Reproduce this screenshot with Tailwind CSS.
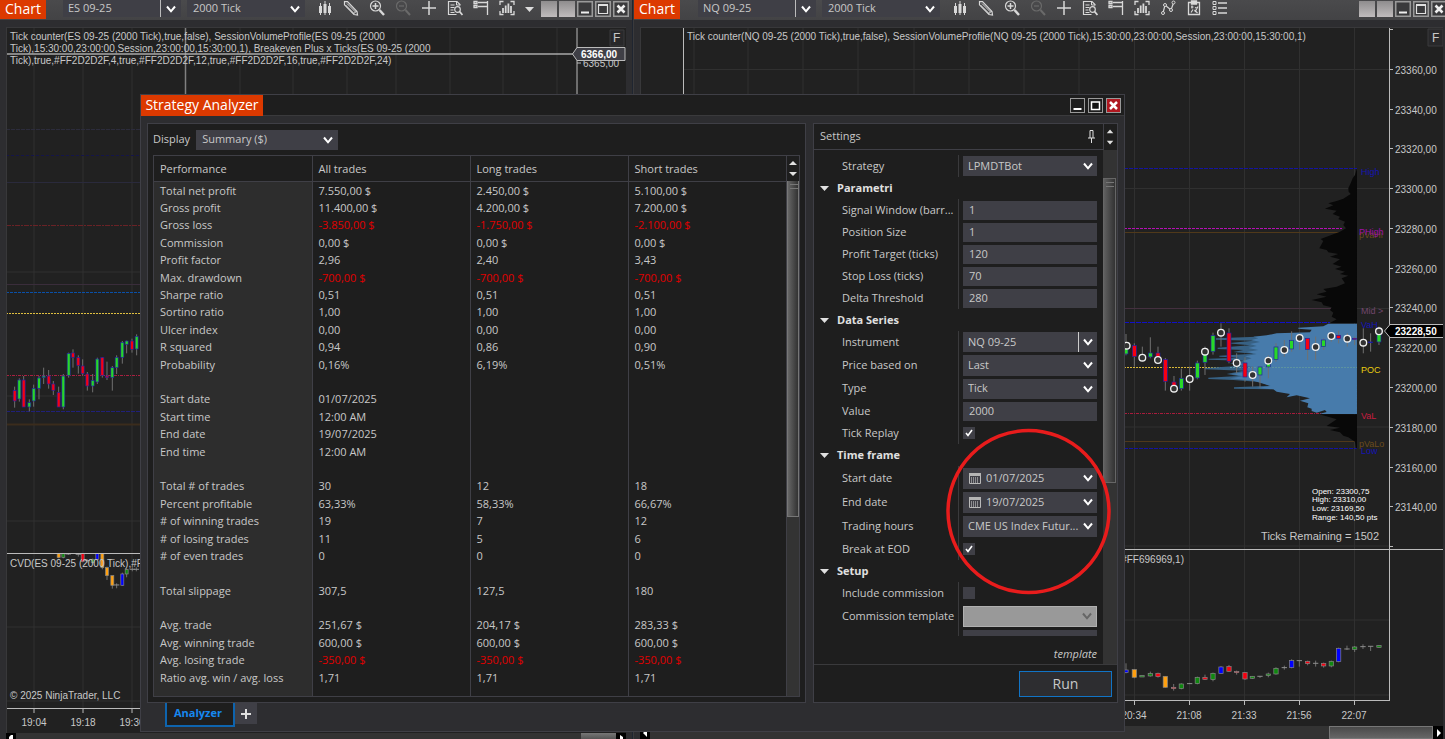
<!DOCTYPE html>
<html lang="en">
<head>
    <meta charset="UTF-8" />
    <meta name="viewport" content="width=device-width, initial-scale=1.0" />
    <title>Strategy Analyzer</title>
    <script src="https://cdn.jsdelivr.net/npm/@tailwindcss/browser@4"></script>
</head>
<body class="relative flex h-screen overflow-hidden bg-[#2d2d30] font-['Open_Sans','Noto_Sans',sans-serif] text-[11px] text-[#c8c8c8]">

    <!-- Shared icons -->
    <svg class="hidden">
        <symbol id="chevron" viewBox="0 0 10 8"><path d="M1 1.500 5 6.300 9 1.500" fill="none" stroke="currentColor" stroke-width="2" /></symbol>
        <symbol id="bars" viewBox="0 0 16 16"><path d="M3.500 3v12M8 1v14M12.500 3v12" stroke="currentColor" stroke-width="1" /><path d="M2 6h3v7H2zM6.500 4h3v9h-3zM11 6h3v7h-3z" fill="currentColor" /></symbol>
        <symbol id="pencil" viewBox="0 0 16 16"><path d="M1.500 1.500 4.500 1.700 14 11.500 14.500 15 11 14.500 1.500 4.800z" fill="none" stroke="currentColor" stroke-width="1.200" /><path d="M4 3.500 12.500 12M2.500 5 11 13.500M10 14l4-3" stroke="currentColor" stroke-width="1" /></symbol>
        <symbol id="zoomin" viewBox="0 0 16 16"><circle cx="6.500" cy="6" r="5" fill="none" stroke="currentColor" stroke-width="1.200" /><path d="M3.500 6h6M6.500 3v6" stroke="currentColor" stroke-width="1.500" /><path d="m10.500 10 4.500 5" stroke="currentColor" stroke-width="2.400" /></symbol>
        <symbol id="zoomout" viewBox="0 0 16 16"><circle cx="6.500" cy="6" r="5" fill="none" stroke="currentColor" stroke-width="1.200" /><path d="M4 6h5" stroke="currentColor" stroke-width="1.200" /><path d="m10.500 10 4.500 5" stroke="currentColor" stroke-width="2" /></symbol>
        <symbol id="plus" viewBox="0 0 16 16"><path d="M1 8h14M8 1v14" stroke="currentColor" stroke-width="1.500" /></symbol>
        <symbol id="docsearch" viewBox="0 0 16 16"><path d="M13 5.500V4.500L10 1.500H1.500v13h8" fill="none" stroke="currentColor" stroke-width="1.200" /><path d="M9.500 1.500V5H13M3.500 5h4M3.500 7.500h4M3.500 10h3M3.500 12.500h4" fill="none" stroke="currentColor" /><circle cx="10.500" cy="9.500" r="2.800" fill="none" stroke="currentColor" stroke-width="1.200" /><path d="m12.500 11.500 3 3.500" stroke="currentColor" stroke-width="1.800" /></symbol>
        <symbol id="trader" viewBox="0 0 16 16"><path d="M1 1.500h3v2H1zM1 5.500h3v2H1zM5 2.500h10M5 6.500h9.500M14.500 1v14" fill="none" stroke="currentColor" stroke-width="1.300" /></symbol>
        <symbol id="capture" viewBox="0 0 16 16"><path d="M1 5V1.500h3.500M11.500 1.500H15V5M15 11v3.500h-3.500M4.500 14.500H1V11" fill="none" stroke="currentColor" stroke-width="1.300" /><path d="M4 8v5M6.700 5.500V13M9.400 3.500V13M12 6v7" stroke="currentColor" stroke-width="1.800" /></symbol>
        <symbol id="polyline" viewBox="0 0 16 16"><path d="M3 13 5 5l6 5 2.500-7" fill="none" stroke="currentColor" stroke-width="1.200" /><g fill="#48484a" stroke="currentColor"><circle cx="3" cy="13" r="1.500" /><circle cx="5" cy="5" r="1.500" /><circle cx="11" cy="10" r="1.500" /><circle cx="13.500" cy="2.500" r="1.500" /></g></symbol>
        <symbol id="clipboard" viewBox="0 0 16 16"><path d="M2.500 2.500h11v12h-11zM5.500 1h5v3h-5z" fill="none" stroke="currentColor" stroke-width="1.300" /><path d="M5 7h2.500M6 5.500v3M9 12l3-5.500M9 7.500l2.500 1M5 12.500l2-3M8.500 10l3 3" fill="none" stroke="currentColor" stroke-width="1.200" /></symbol>
        <symbol id="list" viewBox="0 0 16 16"><path d="M1 1.500h3v3H1zM1 6.500h3v3H1zM1 11.500h3v3H1z" fill="none" stroke="currentColor" /><path d="M6 3h9M6 8h9M6 13h9" stroke="currentColor" stroke-width="1.400" /></symbol>
        <symbol id="min" viewBox="0 0 16 16"><rect x=".75" y=".75" width="14.500" height="14.500" fill="#3a3a3c" stroke="#9a9a9a" stroke-width="1.500" /><path d="M4 11.500h8" stroke="#eee" stroke-width="2" /></symbol>
        <symbol id="max" viewBox="0 0 16 16"><rect x=".75" y=".75" width="14.500" height="14.500" fill="#3a3a3c" stroke="#9a9a9a" stroke-width="1.500" /><path d="M3.500 4.500h9v8h-9z" fill="none" stroke="#e0e0e0" stroke-width="1.200" /><path d="M3 4h10" stroke="#e0e0e0" stroke-width="2" /></symbol>
        <symbol id="close" viewBox="0 0 16 16"><rect x=".75" y=".75" width="14.500" height="14.500" fill="#3a3a3c" stroke="#9a9a9a" stroke-width="1.500" /><path d="m4.500 4.500 7 7M11.500 4.500l-7 7" stroke="#eee" stroke-width="2.600" /></symbol>
        <symbol id="calendar" viewBox="0 0 12 11"><path d="M.5.500h11v10H.5z" fill="#3f3f46" stroke="#b9b9b9" /><path d="M0 0h12v3H0z" fill="#b4b4b4" /><path d="M2 5h8M2 7h8M2 9h8" stroke="#ddd" stroke-dasharray="1 1" /></symbol>
        <linearGradient id="gloss" x1="0" y1="0" x2="0" y2="1"><stop offset="0" stop-color="#888" /><stop offset="1" stop-color="#111" /></linearGradient>
    </svg>

    <!-- ES chart window -->
    <section class="flex w-[633px] shrink-0 flex-col border-r border-[#1f2530]">
        <header class="flex h-5 shrink-0 items-start bg-gradient-to-b from-[#4a4a4c] to-[#434345]">
            <h2 class="h-[19px] w-[46px] bg-[#dc3900] text-center text-[14px] leading-[18px] text-white">Chart</h2>
            <div class="ml-[17px] flex h-[17px] w-[118px] items-center bg-[#3f3f46]">
                <select aria-label="Instrument" class="h-full flex-1 appearance-none border-r border-[#bbb] pl-[5px]"><option>ES 09-25</option></select>
                <svg class="mx-[5px] h-2 w-2.5 text-white"><use href="#chevron" /></svg>
            </div>
            <div class="ml-1.5 flex h-[17px] w-[118px] items-center bg-[#3f3f46]">
                <select aria-label="Interval" class="h-full flex-1 appearance-none pl-1.5"><option>2000 Tick</option></select>
                <svg class="mx-[5px] h-2 w-2.5 text-white"><use href="#chevron" /></svg>
            </div>
            <div class="ml-3 flex items-center gap-2.5 text-[#d8d8d8]">
                <button aria-label="Chart style"><svg class="size-4"><use href="#bars" /></svg></button>
                <button aria-label="Draw"><svg class="size-4"><use href="#pencil" /></svg></button>
                <button aria-label="Zoom in"><svg class="size-4"><use href="#zoomin" /></svg></button>
                <button aria-label="Zoom out" class="text-[#6a6a6a]"><svg class="size-4"><use href="#zoomout" /></svg></button>
                <button aria-label="Crosshair"><svg class="size-4"><use href="#plus" /></svg></button>
                <button aria-label="Data series"><svg class="size-4"><use href="#docsearch" /></svg></button>
                <button aria-label="Chart trader"><svg class="size-4"><use href="#trader" /></svg></button>
                <button aria-label="Indicators"><svg class="size-4"><use href="#capture" /></svg></button>
            </div>
            <button aria-label="More" class="ml-2.5 pt-[7px]"><svg class="h-[5px] w-[9px]"><path d="M0 0h9L4.500 5z" fill="#ddd" /></svg></button>
            <div class="ml-auto flex gap-0.5 pt-px pr-[3px]">
                <button aria-label="Instrument link" class="size-4 bg-gradient-to-b from-[#8f8d8e] to-[#c0bcbd]"></button>
                <button aria-label="Interval link" class="size-4 bg-gradient-to-b from-[#8f8d8e] to-[#c0bcbd]"></button>
                <button aria-label="Minimize"><svg class="size-4"><use href="#min" /></svg></button>
                <button aria-label="Maximize"><svg class="size-4"><use href="#max" /></svg></button>
                <button aria-label="Close"><svg class="size-4"><use href="#close" /></svg></button>
            </div>
        </header>
        <div class="min-h-0 flex-1 pt-[7px] pr-1.5 pl-1.5">
            <svg class="h-full w-full border-t border-l border-[#38383a] bg-[#212121] font-['Liberation_Sans',sans-serif]" viewBox="7 28 619 705" preserveAspectRatio="xMinYMin slice" fill="#c8c8c8" font-size="10">
                <path d="M34 27v681M83 27v681M132 27v681M240 27v681M293 27v681M347 27v681M396 27v681M450 27v681M503 27v681M557 27v681M6 272h571M6 396h571M6 521h571M6 627h571M6 701h571" stroke="#303030" />
                <path d="M6 129.500h570" stroke="#2c2c3c" stroke-dasharray="4 1" />
                <path d="M6 155.500h570" stroke="#15154a" stroke-dasharray="3 2" />
                <path d="M6 182.500h570" stroke="#2a2a3c" />
                <path d="M6 225.500h570" stroke="#6a2226" stroke-dasharray="5 1 2 1" />
                <path d="M6 284.500h570" stroke="#3a2d3b" />
                <path d="M6 292.500h570" stroke="#0a50a8" stroke-dasharray="3 1" />
                <path d="M6 313.500h570" stroke="#e0c040" stroke-dasharray="2 1" />
                <path d="M6 375.500h570" stroke="#a82040" stroke-dasharray="3 1 1 1" />
                <path d="M6 411.500h570" stroke="#20207a" stroke-dasharray="4 1" />
                <path d="M6 424.500h570" stroke="#3b2c1c" stroke-width="2" />
                <g id="esCandles" transform="translate(0 270) scale(.3333)"></g>
                <g id="esDelta" transform="translate(0 270) scale(.3333)"></g>
                <path d="M6 553.500h620M6 708.500h571" stroke="#bbb" />
                <path d="M34 708v5M83 708v5M132 708v5" stroke="#bbb" />
                <path d="M185.500 27v100" stroke="#808080" stroke-width="1.500" />
                <path d="M577 27v681" stroke="#bbb" />
                <text x="10" y="40">Tick counter(ES 09-25 (2000 Tick),true,false), SessionVolumeProfile(ES 09-25 (2000</text>
                <text x="10" y="52">Tick),15:30:00,23:00:00,Session,23:00:00,15:30:00,1), Breakeven Plus x Ticks(ES 09-25 (2000</text>
                <text x="10" y="64">Tick),true,#FF2D2D2F,4,true,#FF2D2D2F,12,true,#FF2D2D2F,16,true,#FF2D2D2F,24)</text>
                <path d="M6 54h567" stroke="#a8a8a8" stroke-width="1.500" />
                <path d="M610 30h14v16h-14z" fill="#28282a" stroke="#3a3a3c" /><text x="613" y="42" font-size="12">F</text>
                <path d="M577 63h4" stroke="#bbb" /><text x="583" y="67">6365,00</text>
                <path d="M572.500 54 577 47.500h48v13h-48z" fill="#3f3f46" stroke="#bbb" /><text x="581" y="58" font-weight="bold" fill="#fff">6366,00</text>
                <text x="10" y="567">CVD(ES 09-25 (2000 Tick),#FF</text>
                <text x="10" y="699">© 2025 NinjaTrader, LLC</text>
                <text x="34" y="726" text-anchor="middle">19:04</text>
                <text x="83" y="726" text-anchor="middle">19:18</text>
                <text x="132" y="726" text-anchor="middle">19:30</text>
            </svg>
        </div>
        <div class="mr-1.5 ml-1.5 flex h-1.5 shrink-0 items-start bg-[#333]">
            <svg class="h-1.5 w-2.5 bg-black"><path d="M3 6V4l2-2h2v4z" fill="#fff" /></svg>
            <span class="ml-auto h-full w-[35px] bg-gradient-to-b from-[#777] to-[#555]"></span>
            <svg class="h-1.5 w-2.5 bg-black"><path d="M4 2v4h3V4z" fill="#fff" /></svg>
        </div>
    </section>

    <!-- NQ chart window -->
    <section class="flex min-w-0 flex-1 flex-col border-l border-[#3a3a3c]">
        <header class="flex h-5 shrink-0 items-start bg-gradient-to-b from-[#4a4a4c] to-[#434345]">
            <h2 class="h-[19px] w-[46px] bg-[#dc3900] text-center text-[14px] leading-[18px] text-white">Chart</h2>
            <div class="ml-[18px] flex h-[17px] w-[118px] items-center bg-[#3f3f46]">
                <select aria-label="Instrument" class="h-full flex-1 appearance-none border-r border-[#bbb] pl-[5px]"><option>NQ 09-25</option></select>
                <svg class="mx-[5px] h-2 w-2.5 text-white"><use href="#chevron" /></svg>
            </div>
            <div class="ml-1.5 flex h-[17px] w-[118px] items-center bg-[#3f3f46]">
                <select aria-label="Interval" class="h-full flex-1 appearance-none pl-1.5"><option>2000 Tick</option></select>
                <svg class="mx-[5px] h-2 w-2.5 text-white"><use href="#chevron" /></svg>
            </div>
            <div class="ml-3 flex items-center gap-2.5 text-[#d8d8d8]">
                <button aria-label="Chart style"><svg class="size-4"><use href="#bars" /></svg></button>
                <button aria-label="Draw"><svg class="size-4"><use href="#pencil" /></svg></button>
                <button aria-label="Zoom in"><svg class="size-4"><use href="#zoomin" /></svg></button>
                <button aria-label="Zoom out" class="text-[#6a6a6a]"><svg class="size-4"><use href="#zoomout" /></svg></button>
                <button aria-label="Crosshair"><svg class="size-4"><use href="#plus" /></svg></button>
                <button aria-label="Data series"><svg class="size-4"><use href="#docsearch" /></svg></button>
                <button aria-label="Chart trader"><svg class="size-4"><use href="#trader" /></svg></button>
                <button aria-label="Indicators"><svg class="size-4"><use href="#capture" /></svg></button>
                <button aria-label="Lines"><svg class="size-4"><use href="#polyline" /></svg></button>
                <button aria-label="Strategies"><svg class="size-4"><use href="#clipboard" /></svg></button>
                <button aria-label="Properties"><svg class="size-4"><use href="#list" /></svg></button>
            </div>
            <div class="-mr-0.5 ml-auto flex gap-0.5 pt-px">
                <button aria-label="Instrument link" class="size-4 bg-gradient-to-b from-[#8f8d8e] to-[#c0bcbd]"></button>
                <button aria-label="Interval link" class="size-4 bg-gradient-to-b from-[#8f8d8e] to-[#c0bcbd]"></button>
                <button aria-label="Minimize"><svg class="size-4"><use href="#min" /></svg></button>
                <button aria-label="Maximize"><svg class="size-4"><use href="#max" /></svg></button>
                <button aria-label="Close"><svg class="size-4"><use href="#close" /></svg></button>
            </div>
        </header>
        <div class="min-h-0 flex-1 pt-[7px] pr-0.5 pl-1.5">
            <svg class="h-full w-full border-t border-l border-[#38383a] bg-[#212121] font-['Liberation_Sans',sans-serif]" viewBox="641 28 802 698" preserveAspectRatio="xMinYMin slice" fill="#c8c8c8" font-size="10">
                <path d="M694 27v673M748 27v673M803 27v673M858 27v673M914 27v673M969 27v673M1024 27v673M1079 27v673M1134.500 27v673M1189.500 27v673M1244.500 27v673M1299.500 27v673M1354.500 27v673M683 69.500h706M683 188.500h706M683 308.500h706M683 427h706M683 546h706M683 620h706M683 695h706" stroke="#303030" />
                <path d="M683.500 27v673" stroke="#bbb" />
                <text x="687" y="40">Tick counter(NQ 09-25 (2000 Tick),true,false), SessionVolumeProfile(NQ 09-25 (2000 Tick),15:30:00,23:00:00,Session,23:00:00,15:30:00,1)</text>
                <path d="M1124 168.500h233M1124 448.500h233" stroke="#1414a0" stroke-dasharray="4 1" />
                <path d="M1124 232.500h233M1124 441.500h233" stroke="#50391a" />
                <path d="M1124 308.500h233" stroke="#44303f" />
                <path d="M1124 322.500h206" stroke="#1010c8" stroke-dasharray="5 1" />
                <path d="M1124 413.500h200" stroke="#a81c3c" stroke-dasharray="3 1 1 1" />
                <path d="M1124 367.500h120" stroke="#d8b838" stroke-dasharray="2 1" />
                <!-- Session volume profile -->
                <g transform="translate(1110 120) scale(.3333)">
                    <path fill="#080808" d="M740 148 735 165 728 175 722 190 715 205 716 215 722 222 700 236 680 243 655 250 670 256 645 266 680 272 668 282 690 290 685 297 705 305 700 315 708 325 690 335 670 343 632 357 640 363 628 385 650 390 655 397 685 402 660 410 690 418 668 432 695 440 675 447 705 455 690 462 715 467 695 475 705 490 680 500 640 507 650 515 620 523 650 530 605 540 635 547 640 556 665 562 660 570 670 578 665 590 680 598 665 606 660 610H741V148z" />
                    <path fill="#376184" d="M440 650 318 655 318 659 430 662 350 670 420 676 323 683 323 687 400 690 370 696 430 701 328 707 328 710 390 713 296 716 296 719 400 722 360 731 420 736 285 744 285 748 400 752 350 762 385 768 295 773 295 777 370 780 450 786 480 797 372 802 372 806 490 808V650z" />
                    <path fill="#477bab" d="M655 611 640 619 565 623 565 626 605 629 600 637 500 640 470 646 430 650 445 655 425 660 450 666 420 672 440 678 415 684 445 690 410 696 440 702 405 709 425 715 400 722 405 728 375 735 430 741 395 748 420 754 365 762 400 769 360 775 430 782 460 791 482 798 440 804 490 808 500 815 540 822 530 832 560 826 600 835 570 842 595 850 592 862 605 866 605 873 620 878 645 870 650 876 628 882H741V611z" />
                    <path fill="#080808" d="M628 883 665 893 680 898 650 918 690 923 660 930 690 937 700 947 715 952 735 965 738 985H741V883z" />
                </g>
                <path d="M1230 367.500h127" stroke="#5c93a0" stroke-dasharray="2 1" />
                <path d="M1124 228.500h218" stroke="#b410b4" stroke-dasharray="3 1" />
                <g id="nqCandles" transform="translate(1110 120) scale(.3333)"></g>
                <g id="nqDelta" transform="translate(1110 400) scale(.3333)"></g>
                <g font-size="9">
                    <text x="1361" y="175" fill="#1414b4">High</text>
                    <text x="1359" y="238" fill="#6b4c1c">pVaHi</text>
                    <text x="1359" y="235" fill="#a010a8">PHigh</text>
                    <text x="1361" y="314" fill="#70466c">Mid &gt;</text>
                    <text x="1361" y="328" fill="#1414b4">VaH</text>
                    <text x="1361" y="373" fill="#e8cc10">POC</text>
                    <text x="1361" y="419" fill="#c81c40">VaL</text>
                    <text x="1361" y="454" fill="#1414b4">Low</text>
                    <text x="1359" y="447" fill="#6b4c1c">pVaLo</text>
                </g>
                <path d="M1389.500 27v673M1124 549.500h319M1124 700.500h266" stroke="#bbb" fill="none" />
                <path d="M1389 29.500h4M1389 69.500h4M1389 109.500h4M1389 148.500h4M1389 188.500h4M1389 228.500h4M1389 268.500h4M1389 307.500h4M1389 347.500h4M1389 387.500h4M1389 427.500h4M1389 467.500h4M1389 506.500h4M1389 546.500h4M1134.500 700v5M1189.500 700v5M1244.500 700v5M1299.500 700v5M1354.500 700v5" stroke="#bbb" />
                <g id="nqPrices"></g>
                <path d="M1384.500 331 1390 324.500h54v13h-54z" fill="#000" stroke="#bbb" />
                <text x="1395" y="335" font-weight="bold" fill="#fff">23228,50</text>
                <path d="M1428 29h15v17h-15z" fill="#28282a" stroke="#3a3a3c" /><text x="1432" y="42" font-size="12">F</text>
                <g font-size="8" fill="#fff">
                    <text x="1312" y="494">Open: 23300,75</text>
                    <text x="1312" y="502">High: 23310,00</text>
                    <text x="1312" y="511">Low: 23169,50</text>
                    <text x="1312" y="520">Range: 140,50 pts</text>
                </g>
                <text x="1379" y="540" font-size="11" text-anchor="end">Ticks Remaining = 1502</text>
                <text x="1184" y="563" text-anchor="end">(2000 Tick),#FF696969,1)</text>
                <g text-anchor="middle">
                    <text x="1134" y="719">20:34</text>
                    <text x="1189" y="719">21:08</text>
                    <text x="1244" y="719">21:33</text>
                    <text x="1299" y="719">21:56</text>
                    <text x="1354" y="719">22:07</text>
                </g>
            </svg>
        </div>
        <div class="mr-0.5 ml-1.5 flex h-[13px] shrink-0 bg-[#333]">
            <svg class="h-[13px] w-2.5 bg-black"><path d="M3 7l4-4v8z" fill="#fff" /></svg>
            <span class="ml-auto h-full w-[104px] border border-[#777] bg-gradient-to-b from-[#4a4a4a] to-[#666]"></span>
            <svg class="h-[13px] w-2.5 bg-black"><path d="M4 3v8l4-4z" fill="#fff" /></svg>
        </div>
    </section>

    <!-- Strategy Analyzer window, floats over both charts -->
    <main class="absolute top-[94px] left-[140px] flex h-[638px] w-[985px] flex-col border border-[#3f3f46] bg-[#2d2d30]">
        <header class="flex h-[21px] shrink-0 items-center border-b border-[#3a3a3c] bg-[#1e1e1e]">
            <h1 class="h-[21px] w-[122px] bg-[#dc3900] text-center text-[14px] leading-5 text-white">Strategy Analyzer</h1>
            <div class="ml-auto flex gap-[3px] pr-[3px]">
                <button aria-label="Minimize"><svg class="size-[15px]" viewBox="0 0 15 15"><rect x=".5" y=".5" width="14" height="14" fill="url(#gloss)" stroke="#999" /><path d="M3.500 11h8" stroke="#fff" stroke-width="2" /></svg></button>
                <button aria-label="Maximize"><svg class="size-[15px]" viewBox="0 0 15 15"><rect x=".5" y=".5" width="14" height="14" fill="url(#gloss)" stroke="#999" /><path d="M3.500 4h8v7.500h-8z" fill="#111" stroke="#fff" stroke-width="1.500" /></svg></button>
                <button aria-label="Close"><svg class="size-[15px]" viewBox="0 0 15 15"><rect x=".5" y=".5" width="14" height="14" fill="#b01820" stroke="#999" /><path d="m4 4 7 7M11 4l-7 7" stroke="#fff" stroke-width="2.500" /></svg></button>
            </div>
        </header>

        <div class="flex min-h-0 flex-1 gap-[7px] pt-[7px] pr-1.5 pl-1.5">
            <!-- Results -->
            <div class="flex min-w-0 flex-1 flex-col">
                <div class="flex h-[580px] flex-col border border-[#3f3f46] bg-[#1e1e1e] px-[5px] pb-[5px]">
                    <div class="flex h-[31px] shrink-0 items-center gap-1.5">
                        <label for="display">Display</label>
                        <div class="flex h-5 w-[142px] items-center bg-[#3f3f46]">
                            <select id="display" class="h-full flex-1 appearance-none pl-1.5"><option>Summary ($)</option></select>
                            <svg class="mx-[5px] h-2 w-2.5 text-white"><use href="#chevron" /></svg>
                        </div>
                    </div>
                    <div class="flex min-h-0 flex-1 border border-[#3f3f46]">
                        <table class="h-full flex-1 table-fixed border-collapse text-left leading-[17px]">
                            <thead>
                                <tr class="h-[25px] border-b border-[#3f3f46]">
                                    <th class="w-1/4 border-r border-[#3f3f46] pl-1.5 font-normal">Performance</th>
                                    <th class="w-1/4 border-r border-[#3f3f46] pl-1.5 font-normal">All trades</th>
                                    <th class="w-1/4 border-r border-[#3f3f46] pl-1.5 font-normal">Long trades</th>
                                    <th class="w-1/4 pl-1.5 font-normal">Short trades</th>
                                </tr>
                            </thead>
                            <tbody id="results"></tbody>
                        </table>
                        <div class="flex w-[13px] flex-col border-l border-[#3f3f46] bg-[#333]">
                            <svg class="h-[25px] w-3 bg-[#1e1e1e]" viewBox="0 0 12 25"><path d="M2 9h8L6 5zM2 16h8l-4 4z" fill="#e0e0e0" /></svg>
                            <div class="h-[336px] border-x border-b border-[#777] bg-gradient-to-r from-[#666] to-[#333] pt-[3px]">
                                <span class="ml-0.5 block h-[5px] w-2 border-y border-[#777]"></span>
                            </div>
                        </div>
                    </div>
                </div>
                <nav class="flex pl-[18px]">
                    <button class="h-6 w-[70px] border-x-2 border-b-2 border-[#0e64ae] bg-[#1e1e1e] pr-1 pb-0.5 font-bold text-[#1688f0]">Analyzer</button>
                    <button aria-label="New tab" class="flex h-[21px] w-[22px] items-center justify-center bg-[#3f3f46]"><svg class="size-2.5" viewBox="0 0 10 10"><path d="M0 5h10M5 0v10" stroke="#e0e0e0" stroke-width="2" /></svg></button>
                </nav>
            </div>

            <!-- Settings -->
            <form class="flex h-[580px] w-[305px] flex-col border border-[#3f3f46] bg-[#1e1e1e]" onsubmit="return false">
                <div class="flex min-h-0 flex-1 border-b border-[#3a3a3c]">
                    <div class="flex min-w-0 flex-1 flex-col overflow-hidden">
                        <div class="flex h-[26px] shrink-0 items-center justify-between border-b border-[#3f3f46] pr-2 pl-1.5">
                            <h3>Settings</h3>
                            <svg class="h-[13px] w-[7px]" viewBox="0 0 7 13" fill="none" stroke="#e0e0e0"><path d="M2 .5h3M2 .5V8M5 .5V8M0 8h7M3.500 8v5" /></svg>
                        </div>
                        <div id="settings" class="flex h-[486px] shrink-0 flex-col overflow-hidden pt-[5px]"></div>
                        <a href="#" class="pt-2.5 pr-1.5 text-right text-[11px] italic">template</a>
                    </div>
                    <div class="flex w-[14px] flex-col bg-[#333]">
                        <svg class="h-[26px] w-[14px] border-l border-[#3f3f46] bg-[#1e1e1e]" viewBox="0 0 14 26"><path d="M3 9h7L6.500 5zM3 17h7l-3.500 4z" fill="#e0e0e0" /></svg>
                        <div class="mt-7 h-[305px] w-[13px] border border-[#666] bg-gradient-to-r from-[#606060] to-[#333] pt-[3px]">
                            <span class="ml-0.5 block h-[5px] w-2 border-y border-[#777]"></span>
                        </div>
                    </div>
                </div>
                <div class="flex h-[37px] shrink-0 items-center justify-end pr-[5px]">
                    <button class="h-[26px] w-[93px] border border-[#1174c6] bg-[#2d2d30] text-[14px]">Run</button>
                </div>
            </form>
        </div>
    </main>

    <!-- Marker round the time frame -->
    <svg class="pointer-events-none absolute top-[428px] left-[945px] h-[167px] w-[167px]" viewBox="0 0 167 167"><ellipse cx="83.500" cy="83.500" rx="80.500" ry="81" fill="none" stroke="#e81c1c" stroke-width="3.500" /></svg>

    <script>
        // Performance table, one row per metric: all / long / short
        const results = [
            ['Total net profit', '7.550,00 $', '2.450,00 $', '5.100,00 $'],
            ['Gross profit', '11.400,00 $', '4.200,00 $', '7.200,00 $'],
            ['Gross loss', '-3.850,00 $', '-1.750,00 $', '-2.100,00 $'],
            ['Commission', '0,00 $', '0,00 $', '0,00 $'],
            ['Profit factor', '2,96', '2,40', '3,43'],
            ['Max. drawdown', '-700,00 $', '-700,00 $', '-700,00 $'],
            ['Sharpe ratio', '0,51', '0,51', '0,51'],
            ['Sortino ratio', '1,00', '1,00', '1,00'],
            ['Ulcer index', '0,00', '0,00', '0,00'],
            ['R squared', '0,94', '0,86', '0,90'],
            ['Probability', '0,16%', '6,19%', '0,51%'],
            [],
            ['Start date', '01/07/2025'],
            ['Start time', '12:00 AM'],
            ['End date', '19/07/2025'],
            ['End time', '12:00 AM'],
            [],
            ['Total # of trades', '30', '12', '18'],
            ['Percent profitable', '63,33%', '58,33%', '66,67%'],
            ['# of winning trades', '19', '7', '12'],
            ['# of losing trades', '11', '5', '6'],
            ['# of even trades', '0', '0', '0'],
            [],
            ['Total slippage', '307,5', '127,5', '180'],
            [],
            ['Avg. trade', '251,67 $', '204,17 $', '283,33 $'],
            ['Avg. winning trade', '600,00 $', '600,00 $', '600,00 $'],
            ['Avg. losing trade', '-350,00 $', '-350,00 $', '-350,00 $'],
            ['Ratio avg. win / avg. loss', '1,71', '1,71', '1,71']
        ];
        const cell = (text, last) => {
            const color = text && text[0] === '-' ? 'text-[#e00000]' : '';
            const border = last ? '' : 'border-r border-[#3f3f46]';
            return `<td class="pl-1.5 ${border} ${color}">${text || '&nbsp;'}</td>`;
        };
        document.getElementById('results').innerHTML = results.map(r =>
            `<tr><th class="border-r border-[#3f3f46] bg-[#2d2d2d] pl-1.5 font-normal">${r[0] || '&nbsp;'}</th>${cell(r[1])}${cell(r[2])}${cell(r[3], true)}</tr>`
        ).join('') + '<tr class="h-2.5"><th class="border-r border-[#3f3f46] bg-[#2d2d2d]"></th><td class="border-r border-[#3f3f46]"></td><td class="border-r border-[#3f3f46]"></td><td></td></tr>';

        // Settings rows: [type, label, value]
        const settings = [
            ['select', 'Strategy', 'LPMDTBot'],
            ['group', 'Parametri'],
            ['text', 'Signal Window (barr...', '1'],
            ['text', 'Position Size', '1'],
            ['text', 'Profit Target (ticks)', '120'],
            ['text', 'Stop Loss (ticks)', '70'],
            ['text', 'Delta Threshold', '280'],
            ['group', 'Data Series'],
            ['split', 'Instrument', 'NQ 09-25'],
            ['tall', 'Price based on', 'Last'],
            ['select', 'Type', 'Tick'],
            ['text', 'Value', '2000'],
            ['check', 'Tick Replay', 'checked'],
            ['group', 'Time frame'],
            ['date', 'Start date', '01/07/2025'],
            ['date', 'End date', '19/07/2025'],
            ['tall', 'Trading hours', 'CME US Index Futur...'],
            ['check', 'Break at EOD', 'checked'],
            ['group', 'Setup'],
            ['check', 'Include commission', ''],
            ['disabled', 'Commission template', ''],
            ['cut', '', '']
        ];
        const chevron = '<svg class="mx-1 h-2 w-2.5 shrink-0 text-white"><use href="#chevron" /></svg>';
        const control = (type, value, id) => {
            if (type === 'text') return `<input id="${id}" type="text" value="${value}" class="h-[19px] w-full bg-[#3f3f46] px-1.5 pb-0.5 outline-none" />`;
            if (type === 'check') return `<input id="${id}" type="checkbox" ${value} class="peer size-3 appearance-none bg-[#3f3f46]" /><svg class="pointer-events-none absolute left-[6px] hidden size-2 peer-checked:block" viewBox="0 0 8 8"><path d="M1 4l2 2.500L7 1" fill="none" stroke="#fff" stroke-width="1.600" /></svg>`;
            if (type === 'disabled') return `<div class="flex h-[21px] w-full items-center border border-[#b0b0b0] bg-[#999]"><select id="${id}" disabled class="h-full flex-1 appearance-none"><option></option></select><svg class="mx-1 h-2 w-2.5 text-[#666]"><use href="#chevron" /></svg></div>`;
            if (type === 'cut') return '<div class="h-1.5 w-full bg-[#3f3f46]"></div>';
            const icon = type === 'date' ? '<svg class="ml-1.5 h-[11px] w-3 shrink-0"><use href="#calendar" /></svg>' : '';
            const height = type === 'select' || type === 'split' ? 'h-5' : 'h-[21px]';
            const split = type === 'split' ? 'border-r border-[#ccc]' : '';
            return `<div class="flex ${height} w-full items-center bg-[#3f3f46]">${icon}<select id="${id}" class="h-full min-w-0 flex-1 appearance-none pl-[5px] ${split}"><option>${value}</option></select>${chevron}</div>`;
        };
        const rowHeight = (type, label) => {
            if (type === 'cut') return 'h-[9px]';
            if (label === 'Type') return 'h-[23px]';
            return ['tall', 'date', 'disabled'].includes(type) ? 'h-6' : 'h-[22px]';
        };
        document.getElementById('settings').innerHTML = settings.map(([type, label, value], i) => {
            if (type === 'group') {
                return `<h4 class="flex h-[22px] shrink-0 items-center gap-2 pl-1.5 font-bold text-[#e0e0e0]"><svg class="h-[5px] w-[9px]"><path d="M0 0h9L4.500 5z" fill="#e0e0e0" /></svg>${label}</h4>`;
            }
            return `<div class="flex ${rowHeight(type, label)} shrink-0 items-stretch pr-1.5 pl-7">
                <label for="s${i}" class="flex w-[117px] shrink-0 items-center whitespace-nowrap border-r border-[#3a3a3c]">${label}</label>
                <div class="relative flex flex-1 items-center pl-1">${control(type, value, 's' + i)}</div>
            </div>`;
        }).join('');

        // Candles: [x, high, low, open/close top, open/close bottom, color]
        const G = '#28d828', R = '#f80010', B = '#0000ff', O = '#ffa010', D = '#108810';
        const candles = (id, rows, stroke, width) => {
            document.getElementById(id).innerHTML = rows.map(([x, hi, lo, top, bottom, color]) => {
                let out = `<path d="M${x} ${hi}V${lo}" stroke="#707070" stroke-width="3" />`;
                if (color) out += `<rect x="${x - width / 2}" y="${top}" width="${width}" height="${bottom - top}" fill="${color}" stroke="${stroke}" stroke-width="2" />`;
                else if (top) out += `<path d="M${x - 8} ${top}h16" stroke="#909090" stroke-width="3" />`;
                return out;
            }).join('');
        };
        candles('esCandles', [
            [44, 350, 413, 362, 393, R], [58, 325, 395, 330, 387, G], [71, 318, 411, 330, 411, R], [88, 388, 424, 398, 411, G],
            [101, 344, 410, 355, 393, G], [117, 318, 388, 324, 355, G], [131, 293, 342, 318, 323, G], [146, 300, 356, 318, 342, R],
            [160, 333, 375, 342, 361, R], [176, 350, 411, 367, 411, R], [190, 312, 418, 318, 411, G], [206, 248, 323, 250, 316, G],
            [219, 238, 293, 249, 262, R], [235, 256, 311, 263, 287, R], [248, 268, 316, 288, 311, R], [262, 306, 362, 312, 348, R],
            [278, 312, 367, 331, 348, G], [292, 263, 342, 267, 336, G], [307, 262, 323, 263, 316, R], [321, 275, 330, 318, 323, R],
            [337, 288, 362, 293, 323, G], [350, 256, 312, 262, 293, G], [367, 213, 281, 217, 262, G], [380, 212, 250, 213, 223, G],
            [396, 206, 248, 213, 238, R], [410, 193, 256, 199, 237, G]
        ], '#2020a0', 9);
        candles('esDelta', [
            [176, 850, 865, 850, 863, O], [190, 850, 865, 850, 862, D], [205, 850, 855, 852], [235, 850, 860, 853], [248, 850, 877, 850, 875, R],
            [262, 868, 878, 872], [278, 866, 880, 868, 878, D], [292, 850, 870, 850, 868, B], [307, 850, 898, 850, 893, O],
            [321, 890, 930, 893, 917, O], [337, 917, 956, 917, 946, O], [350, 940, 955, 945], [367, 908, 948, 912, 946, B],
            [380, 896, 922, 899, 912, D], [397, 892, 904, 898], [409, 892, 904, 898]
        ], '#888', 9);
        candles('nqCandles', [
            [48, 642, 706, 672, 702, G], [73, 670, 740, 677, 710, R], [97, 680, 720], [121, 652, 715, 699, 711, G], [144, 680, 720, 699, 714, R],
            [166, 714, 812, 719, 784, R], [192, 768, 815, 786, 800, R], [214, 746, 812, 775, 806, G], [239, 740, 812], [262, 722, 778, 729, 774, G],
            [285, 680, 765, 697, 727, G], [309, 638, 704, 647, 695, G], [333, 610, 680], [357, 625, 730, 639, 724, R], [380, 700, 760],
            [405, 712, 785, 729, 771, R], [428, 740, 800], [450, 738, 803, 741, 765, G], [475, 706, 775, 725, 741, G], [498, 670, 725, 681, 719, G],
            [523, 660, 710], [545, 634, 695, 661, 687, G], [569, 640, 690], [593, 655, 720, 655, 688, R], [617, 650, 720],
            [641, 655, 690, 660, 680, G], [664, 640, 665], [686, 632, 670, 646, 655, R], [712, 640, 680], [734, 650, 675, 655, 658, R],
            [760, 625, 700], [782, 640, 695, 666, 668, B], [807, 620, 675, 639, 666, G]
        ], '#2020a0', 12);
        // Dots printed on the NQ bars
        document.getElementById('nqCandles').innerHTML += [
            [50, 677], [97, 713], [144, 720], [192, 806], [239, 777], [285, 695], [333, 638], [380, 729], [428, 765], [475, 722],
            [523, 690], [569, 654], [617, 681], [664, 648], [712, 656], [760, 668], [807, 634]
        ].map(([x, y]) => `<circle cx="${x}" cy="${y}" r="10" fill="#333" stroke="#f0f0f0" stroke-width="4" />`).join('');
        candles('nqDelta', [
            [48, 790, 820, 810, 818, B], [73, 808, 835, 809, 832, O], [96, 826, 831, 827, 831, D], [121, 815, 830, 821, 828, D],
            [144, 818, 833, 820, 830, R], [166, 829, 863, 829, 862, O], [191, 852, 872, 862, 866, R], [214, 850, 868, 852, 866, D],
            [239, 849, 852, 851], [262, 830, 853, 832, 851, D], [285, 824, 840, 832, 838, R], [309, 818, 844, 820, 839, D],
            [333, 798, 822, 801, 821, B], [357, 795, 816, 800, 814, R], [380, 812, 824, 815, 818, R], [405, 816, 840, 818, 837, R],
            [427, 828, 837, 829, 835, D], [450, 828, 834, 829], [475, 818, 832, 822, 827, D], [498, 802, 824, 805, 822, D],
            [523, 797, 809, 803], [545, 778, 805, 782, 803, B], [568, 782, 800, 782], [593, 782, 796, 784, 791, R], [617, 782, 800, 790],
            [641, 788, 803, 790, 798, R], [664, 782, 802, 784, 798, D], [686, 743, 787, 745, 785, B], [711, 737, 750, 747],
            [734, 738, 756, 741, 748, D], [759, 733, 747, 740], [782, 739, 753, 739], [807, 735, 743, 737, 742, D]
        ].map(([x, hi, lo, top, bottom, color]) => [x, hi, lo, top, bottom, color]), '#888', 13);

        // Price axis
        const prices = [[360, 70], [340, 110], [320, 149], [300, 189], [280, 229], [260, 269], [240, 308], [220, 348], [200, 388], [180, 428], [160, 468], [140, 507]];
        document.getElementById('nqPrices').innerHTML = prices.map(([p, y]) => `<text x="1395" y="${y + 4}">23${p},00</text>`).join('');
    </script>
</body>
</html>
